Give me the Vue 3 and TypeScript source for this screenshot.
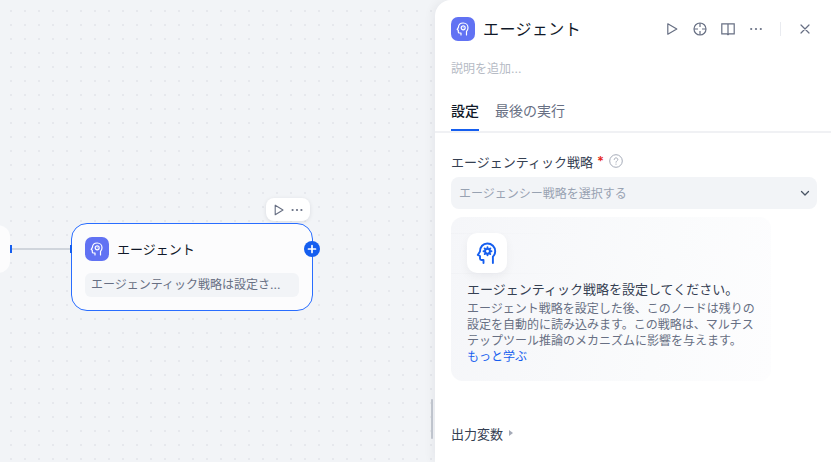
<script setup lang="ts">
const headActions = ['play', 'target', 'book', 'more'] as const
</script>

<template>
  <div class="app">
    <section class="canvas">
      <div class="prev-node"><i class="handle handle-out"></i></div>
      <div class="edge"></div>
      <div class="toolbar">
        <svg width="14" height="14" viewBox="0 0 14 14" fill="none"><path d="M3.2 2.2v9.6L11 7z" stroke="#676f83" stroke-width="1.1" stroke-linejoin="round"/></svg>
        <svg width="14" height="14" viewBox="0 0 14 14" fill="#676f83"><circle cx="2.6" cy="7" r="1.1"/><circle cx="7" cy="7" r="1.1"/><circle cx="11.4" cy="7" r="1.1"/></svg>
      </div>
      <div class="node">
        <i class="handle handle-in"></i>
        <div class="node-head">
          <span class="agent-icon">
            <svg width="16" height="16" viewBox="0 0 16 16" fill="none" stroke="#fff" stroke-width="1.2" stroke-linecap="round" stroke-linejoin="round"><path d="M6 14v-2H4.300a1 1 0 0 1-1-1V9.200L2.200 8.400 3.300 6.700C3.500 3.800 5.500 2 8.200 2c2.800 0 4.800 2 4.800 4.700 0 1.600-.6 2.700-1.500 3.600V14"/><circle cx="8.200" cy="6.800" r="2"/><circle cx="8.200" cy="6.800" r=".5" fill="#fff" stroke="none"/></svg>
          </span>
          <span class="node-title">エージェント</span>
        </div>
        <div class="node-status">エージェンティック戦略は設定さ...</div>
        <span class="plus">
          <svg width="10" height="10" viewBox="0 0 10 10"><path d="M5 1.500v7M1.500 5h7" stroke="#fff" stroke-width="1.700" stroke-linecap="round"/></svg>
        </span>
      </div>
      <div class="resize-bar"></div>
    </section>

    <aside class="panel">
      <header class="head">
        <span class="agent-icon">
          <svg width="16" height="16" viewBox="0 0 16 16" fill="none" stroke="#fff" stroke-width="1.200" stroke-linecap="round" stroke-linejoin="round"><path d="M6 14v-2H4.300a1 1 0 0 1-1-1V9.200L2.200 8.400 3.300 6.700C3.500 3.800 5.500 2 8.200 2c2.800 0 4.800 2 4.800 4.700 0 1.600-.6 2.700-1.500 3.600V14"/><circle cx="8.200" cy="6.800" r="2"/><circle cx="8.200" cy="6.800" r=".5" fill="#fff" stroke="none"/></svg>
        </span>
        <h1 class="title">エージェント</h1>
        <div class="actions">
          <template v-for="a in headActions" :key="a">
            <svg v-if="a === 'play'" width="16" height="16" viewBox="0 0 16 16" fill="none"><path d="M3.800 2.800v10.400L12.800 8z" stroke="#676f83" stroke-width="1.200" stroke-linejoin="round"/></svg>
            <svg v-else-if="a === 'target'" width="16" height="16" viewBox="0 0 16 16" fill="none" stroke="#676f83" stroke-width="1.200"><circle cx="8" cy="8" r="6"/><path d="M8 2v4M8 10v4M2 8h4M10 8h4"/></svg>
            <svg v-else-if="a === 'book'" width="16" height="16" viewBox="0 0 16 16" fill="none" stroke="#676f83" stroke-width="1.200"><path d="M1.800 2.800h12.400v10H9.200L8 13.800l-1.200-1H1.800zM8 2.800v11"/></svg>
            <svg v-else width="16" height="16" viewBox="0 0 16 16" fill="#676f83"><circle cx="3.200" cy="8" r="1.100"/><circle cx="8" cy="8" r="1.100"/><circle cx="12.800" cy="8" r="1.100"/></svg>
          </template>
          <span class="sep"></span>
          <svg width="16" height="16" viewBox="0 0 16 16" fill="none"><path d="M4 4l8 8M12 4l-8 8" stroke="#676f83" stroke-width="1.200" stroke-linecap="round"/></svg>
        </div>
      </header>
      <p class="desc">説明を追加...</p>
      <nav class="tabs">
        <span class="tab active">設定</span>
        <span class="tab">最後の実行</span>
      </nav>
      <div class="body">
        <label class="field-label">
          <span>エージェンティック戦略</span>
          <b class="req">*</b>
          <svg width="14" height="14" viewBox="0 0 14 14" fill="none" class="help"><circle cx="7" cy="7" r="6.300" stroke="#a5abb8" stroke-width="1"/><path d="M5.200 5.500C5.300 4.500 6.100 3.900 7 3.900c1 0 1.800.7 1.800 1.600 0 1.300-1.800 1.400-1.800 2.700" stroke="#a5abb8" stroke-width="1" stroke-linecap="round"/><circle cx="7" cy="10.100" r=".6" fill="#a5abb8"/></svg>
        </label>
        <div class="select">
          <span class="placeholder">エージェンシー戦略を選択する</span>
          <svg width="14" height="14" viewBox="0 0 14 14" fill="none"><path d="M3.500 5.500L7 9l3.500-3.500" stroke="#495464" stroke-width="1.300" stroke-linecap="round" stroke-linejoin="round"/></svg>
        </div>
        <div class="card">
          <span class="card-icon">
            <svg width="24" height="24" viewBox="0 0 24 24" fill="none" stroke="#155eef" stroke-width="1.900" stroke-linecap="round" stroke-linejoin="round"><path d="M8.500 22v-3H6.500A1.500 1.500 0 0 1 5 17.500V15l-2.200-1L5 10.500C5 5.800 8 2.500 12.300 2.500c4.500 0 7.900 3.300 7.900 7.700 0 2.500-.9 4.100-2.300 5.500V22"/><circle cx="12.500" cy="10.300" r="2.400"/><path d="M12.500 6.300v1.200M12.500 13.100v1.200M8.500 10.300h1.200M15.300 10.300h1.200M9.700 7.500l.8.800M14.500 12.300l.8.800M15.300 7.500l-.8.800M10.500 12.300l-.8.800"/></svg>
          </span>
          <h2 class="card-title">エージェンティック戦略を設定してください。</h2>
          <p class="card-text">エージェント戦略を設定した後、このノードは残りの設定を自動的に読み込みます。この戦略は、マルチステップツール推論のメカニズムに影響を与えます。</p>
          <a class="card-link">もっと学ぶ</a>
        </div>
        <div class="output">
          <span>出力変数</span>
          <i class="caret"></i>
        </div>
      </div>
    </aside>
  </div>
</template>

<style>
html, body { margin: 0; background: #f2f4f7; overflow: hidden; }
</style>

<style scoped>
.app {
  display: flex;
  width: 831px;
  height: 462px;
  overflow: hidden;
  font-family: Inter, "Noto Sans CJK JP", sans-serif;
  color: #354052;
}
.canvas {
  position: relative;
  width: 435px;
  flex: none;
  background-color: #f2f4f7;
  background-image: radial-gradient(circle at 11px 11px, #e6e8ed 1.2px, transparent 1.3px);
  background-size: 14px 14px;
}
.prev-node {
  position: absolute;
  left: -40px;
  top: 225px;
  width: 50px;
  height: 48px;
  border-radius: 12px;
  background: #fcfcfd;
}
.handle {
  position: absolute;
  width: 2px;
  height: 8px;
  background: #155eef;
}
.handle-out { right: -2px; top: 20px; }
.handle-in { left: -2px; top: 21px; }
.edge {
  position: absolute;
  left: 12px;
  top: 248px;
  width: 58px;
  height: 2px;
  background: #d0d5dc;
}
.toolbar {
  position: absolute;
  left: 266px;
  top: 198px;
  width: 44px;
  height: 23px;
  box-sizing: border-box;
  padding: 0 6px;
  display: flex;
  align-items: center;
  justify-content: space-between;
  background: #fff;
  border-radius: 8px;
  box-shadow: 0 1px 4px rgba(16, 24, 40, .1);
}
.node {
  position: absolute;
  left: 71px;
  top: 223px;
  width: 242px;
  height: 88px;
  box-sizing: border-box;
  padding: 13px 13px 0;
  background: #fcfcfd;
  border: 1px solid #296dff;
  border-radius: 16px;
}
.node-head {
  display: flex;
  align-items: center;
  gap: 8px;
}
.agent-icon {
  display: flex;
  align-items: center;
  justify-content: center;
  width: 24px;
  height: 24px;
  flex: none;
  border-radius: 7px;
  background: #6172f3;
}
.node-title {
  font-size: 13px;
  font-weight: 400;
  line-height: 24px;
  color: #101828;
}
.node-status {
  margin-top: 12px;
  height: 24px;
  padding-left: 6px;
  border-radius: 6px;
  background: #f2f4f7;
  font-size: 12px;
  line-height: 24px;
  color: #676f83;
  white-space: nowrap;
}
.plus {
  position: absolute;
  right: -8px;
  top: 17px;
  width: 16px;
  height: 16px;
  border-radius: 50%;
  background: #155eef;
  display: flex;
  align-items: center;
  justify-content: center;
}
.resize-bar {
  position: absolute;
  left: 431px;
  top: 399px;
  width: 2px;
  height: 40px;
  border-radius: 1px;
  background: #c4c9d2;
}
.panel {
  position: relative;
  flex: 1;
  min-width: 0;
  background: #fff;
  border-radius: 16px 0 0 0;
  box-shadow: -3px 0 10px rgba(16, 24, 40, .05);
  display: flex;
  flex-direction: column;
}
.head {
  display: flex;
  align-items: center;
  padding: 17px 18px 0 16px;
  height: 24px;
}
.title {
  margin: 0 0 0 8px;
  flex: 1;
  font-size: 16px;
  font-weight: 400;
  letter-spacing: .4px;
  line-height: 24px;
  color: #101828;
}
.actions {
  display: flex;
  align-items: center;
  gap: 12px;
}
.sep {
  width: 1px;
  height: 14px;
  margin: 0 4px;
  background: #e9ebf0;
}
.desc {
  margin: 19px 0 0 16px;
  font-size: 12px;
  line-height: 18px;
  color: #b6bbc5;
}
.tabs {
  display: flex;
  gap: 16px;
  margin-top: 21px;
  padding-left: 16px;
  height: 32px;
  border-bottom: 2px solid #f0f1f4;
}
.tab {
  height: 32px;
  box-sizing: border-box;
  font-size: 14px;
  font-weight: 400;
  line-height: 24px;
  color: #676f83;
}
.tab.active {
  color: #101828;
  font-weight: 500;
  border-bottom: 2px solid #155eef;
}
.body {
  padding: 18px 14px 0 16px;
}
.field-label {
  display: flex;
  align-items: center;
  height: 20px;
  font-size: 13px;
  font-weight: 400;
  color: #354052;
}
.req {
  color: #e5271b;
  font-weight: 600;
  margin: 0 5px 0 4px;
}
.select {
  margin-top: 6px;
  height: 32px;
  padding: 0 5px 0 8px;
  display: flex;
  align-items: center;
  justify-content: space-between;
  border-radius: 8px;
  background: #f2f4f7;
  font-size: 12px;
  color: #98a2b2;
}
.placeholder {
  margin-top: -2px;
}
.card {
  margin-top: 8px;
  box-sizing: border-box;
  width: 320px;
  height: 164px;
  padding: 16px;
  border-radius: 12px;
  background:
    linear-gradient(90deg, rgba(16, 24, 40, .015), transparent 45%) 0 16px / 100% 1px no-repeat,
    linear-gradient(90deg, rgba(16, 24, 40, .015), transparent 45%) 0 56px / 100% 1px no-repeat,
    linear-gradient(100deg, #f5f6f9 0%, #fafbfc 65%, #fdfdfe 100%);
}
.card-icon {
  display: flex;
  align-items: center;
  justify-content: center;
  width: 40px;
  height: 40px;
  border-radius: 10px;
  background: #fff;
  box-shadow: 0 4px 10px rgba(16, 24, 40, .05);
}
.card-title {
  margin: 7px 0 0;
  font-size: 13px;
  font-weight: 400;
  line-height: 18px;
  color: #354052;
  white-space: nowrap;
}
.card-text {
  margin: 3px 0 0;
  font-size: 12px;
  line-height: 16px;
  color: #676f83;
}
.card-link {
  display: block;
  font-size: 12px;
  line-height: 16px;
  color: #155eef;
}
.output {
  margin-top: 43px;
  display: flex;
  align-items: center;
  gap: 6px;
  height: 18px;
  font-size: 13px;
  font-weight: 400;
  color: #354052;
}
.caret {
  width: 0;
  height: 0;
  border-left: 4px solid #a5abb8;
  border-top: 3.500px solid transparent;
  border-bottom: 3.500px solid transparent;
}
</style>
